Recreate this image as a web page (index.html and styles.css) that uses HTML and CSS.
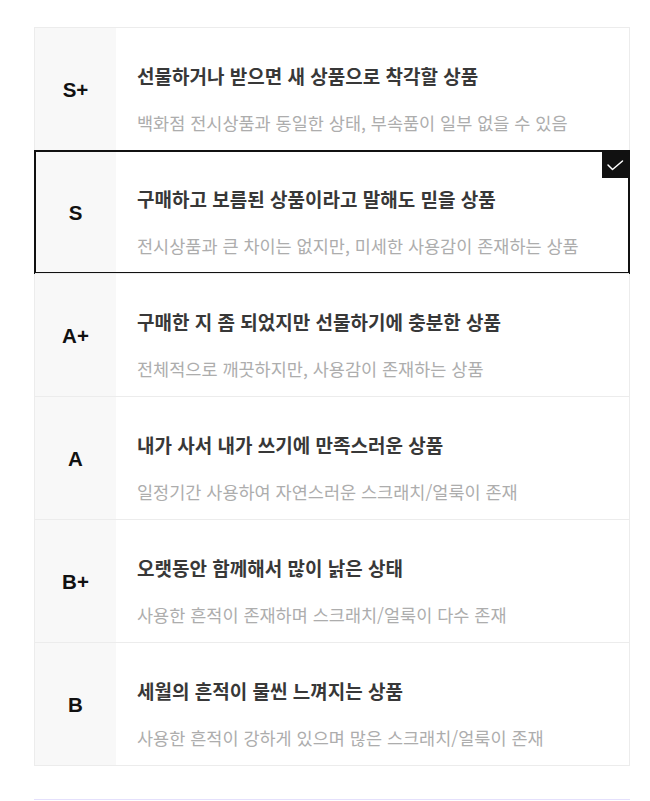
FILE: index.html
```html
<!DOCTYPE html>
<html lang="ko">
<head>
<meta charset="utf-8">
<title>상품 등급 안내</title>
<link rel="stylesheet" href="styles.css">
</head>
<body>
<div class="page">
  <ul class="grades">
    <li class="grade">
      <div class="grade-label">S+</div>
      <div class="grade-body">
        <p class="grade-title">선물하거나 받으면 새 상품으로 착각할 상품</p>
        <p class="grade-desc">백화점 전시상품과 동일한 상태, 부속품이 일부 없을 수 있음</p>
      </div>
    </li>
    <li class="grade is-selected">
      <div class="grade-label">S</div>
      <div class="grade-body">
        <p class="grade-title">구매하고 보름된 상품이라고 말해도 믿을 상품</p>
        <p class="grade-desc">전시상품과 큰 차이는 없지만, 미세한 사용감이 존재하는 상품</p>
      </div>
      <span class="check-badge">
        <svg width="28" height="28" viewBox="0 0 28 28"><path d="M6 15 L10.5 19.5 L20.5 11" fill="none" stroke="#fff" stroke-width="1.5" stroke-linecap="round" stroke-linejoin="round"/></svg>
      </span>
    </li>
    <li class="grade">
      <div class="grade-label">A+</div>
      <div class="grade-body">
        <p class="grade-title">구매한 지 좀 되었지만 선물하기에 충분한 상품</p>
        <p class="grade-desc">전체적으로 깨끗하지만, 사용감이 존재하는 상품</p>
      </div>
    </li>
    <li class="grade">
      <div class="grade-label">A</div>
      <div class="grade-body">
        <p class="grade-title">내가 사서 내가 쓰기에 만족스러운 상품</p>
        <p class="grade-desc">일정기간 사용하여 자연스러운 스크래치/얼룩이 존재</p>
      </div>
    </li>
    <li class="grade">
      <div class="grade-label">B+</div>
      <div class="grade-body">
        <p class="grade-title">오랫동안 함께해서 많이 낡은 상태</p>
        <p class="grade-desc">사용한 흔적이 존재하며 스크래치/얼룩이 다수 존재</p>
      </div>
    </li>
    <li class="grade">
      <div class="grade-label">B</div>
      <div class="grade-body">
        <p class="grade-title">세월의 흔적이 물씬 느껴지는 상품</p>
        <p class="grade-desc">사용한 흔적이 강하게 있으며 많은 스크래치/얼룩이 존재</p>
      </div>
    </li>
  </ul>
  <div class="next-section"></div>
</div>
</body>
</html>
```
FILE: styles.css
```css
* { box-sizing: border-box; }

html, body {
  margin: 0;
  padding: 0;
  background: #fff;
}

body {
  font-family: "Noto Sans CJK KR", "Noto Sans", sans-serif;
  color: #333;
}

.page {
  padding: 27px 20px 0 34px;
}

.grades {
  list-style: none;
  margin: 0;
  padding: 0;
  border: 1px solid #ececec;
}

.grade {
  position: relative;
  display: flex;
  height: 123px;
  border-top: 1px solid #ececec;
}

.grade:first-child {
  border-top: 0;
  height: 122px;
}

.grade-label {
  flex: 0 0 81px;
  display: flex;
  align-items: center;
  justify-content: center;
  padding-top: 1px;
  background: #f8f8f8;
  font-family: "Liberation Sans", Arial, sans-serif;
  font-weight: 700;
  font-size: 20.5px;
  color: #111;
}

.grade-body {
  flex: 1;
  padding: 34px 0 0 21px;
}

.grade-title {
  margin: 0;
  font-size: 19px;
  line-height: 28px;
  font-weight: 700;
  color: #383838;
}

.grade-desc {
  margin: 19px 0 0;
  font-size: 17.5px;
  line-height: 28px;
  font-weight: 400;
  color: #adadad;
}

/* selected grade: dark frame drawn over the row borders */
.is-selected::after {
  content: "";
  position: absolute;
  top: -1px;
  left: -1px;
  right: -1px;
  bottom: -1px;
  border: 2px solid #111;
  pointer-events: none;
}

.check-badge {
  position: absolute;
  top: -1px;
  right: -1px;
  width: 28px;
  height: 28px;
  background: #111;
  display: block;
}

.check-badge svg { display: block; }

.next-section {
  margin-top: 33px;
  border-top: 1px solid #e4e0fc;
  height: 10px;
}
```
